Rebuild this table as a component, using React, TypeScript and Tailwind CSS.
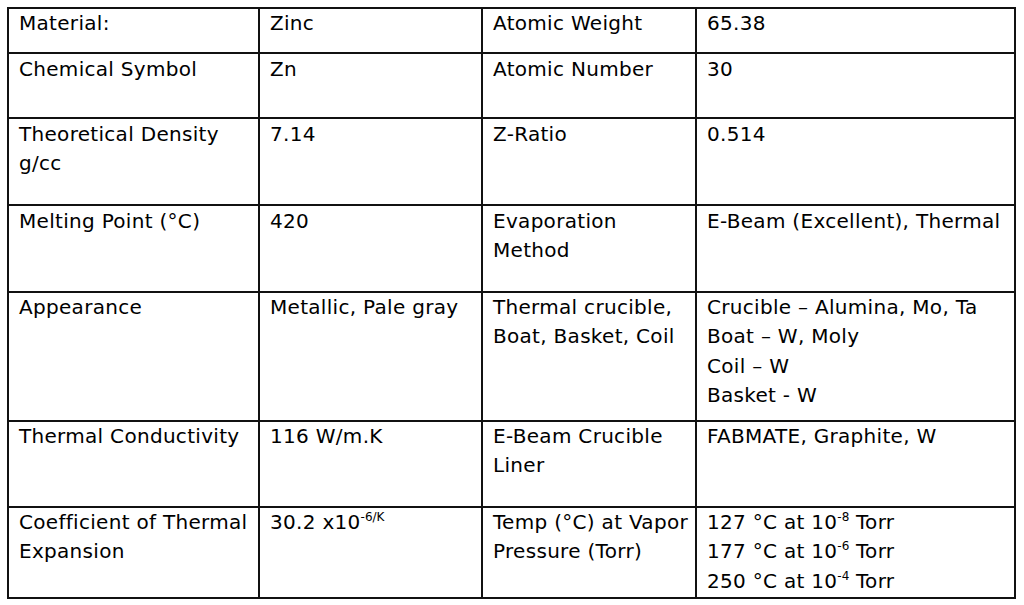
import type { ReactNode } from "react";

type Row = {
  h: string;
  shift: string;
  cells: ReactNode[];
};

const rows: Row[] = [
  {
    h: "h-[45px]",
    shift: "mt-0",
    cells: ["Material:", "Zinc", "Atomic Weight", "65.38"],
  },
  {
    h: "h-[65px]",
    shift: "mt-[1px]",
    cells: ["Chemical Symbol", "Zn", "Atomic Number", "30"],
  },
  {
    h: "h-[87px]",
    shift: "mt-[1px]",
    cells: [
      <>
        Theoretical Density
        <br />
        g/cc
      </>,
      "7.14",
      "Z-Ratio",
      "0.514",
    ],
  },
  {
    h: "h-[87px]",
    shift: "mt-[1px]",
    cells: [
      "Melting Point (°C)",
      "420",
      <>
        Evaporation
        <br />
        Method
      </>,
      "E-Beam (Excellent), Thermal",
    ],
  },
  {
    h: "h-[129px]",
    shift: "mt-0",
    cells: [
      "Appearance",
      "Metallic, Pale gray",
      <>
        Thermal crucible,
        <br />
        Boat, Basket, Coil
      </>,
      <>
        Crucible – Alumina, Mo, Ta
        <br />
        Boat – W, Moly
        <br />
        Coil – W
        <br />
        Basket - W
      </>,
    ],
  },
  {
    h: "h-[86px]",
    shift: "mt-0",
    cells: [
      "Thermal Conductivity",
      "116 W/m.K",
      <>
        E-Beam Crucible
        <br />
        Liner
      </>,
      "FABMATE, Graphite, W",
    ],
  },
  {
    h: "h-[91px]",
    shift: "mt-0",
    cells: [
      <>
        Coefficient of Thermal
        <br />
        Expansion
      </>,
      <>
        30.2 x10<Sup>-6/K</Sup>
      </>,
      <>
        Temp (°C) at Vapor
        <br />
        Pressure (Torr)
      </>,
      <>
        127 °C at 10<Sup>-8</Sup> Torr
        <br />
        177 °C at 10<Sup>-6</Sup> Torr
        <br />
        250 °C at 10<Sup>-4</Sup> Torr
      </>,
    ],
  },
];

const widths = ["w-[251px]", "w-[223px]", "w-[214px]", "w-[319px]"];

function Sup({ children }: { children: ReactNode }) {
  return (
    <span className="relative -top-[8px] text-[12px] leading-none tracking-normal">
      {children}
    </span>
  );
}

export default function App() {
  return (
    <div
      className="w-[1024px] h-[605px] bg-white pt-[7px] pl-[7px] text-black"
      style={{ fontFamily: '"DejaVu Sans", sans-serif' }}
    >
      <div className="w-[1009px] border-l-2 border-t-2 border-[#111]">
        {rows.map((row, i) => (
          <div key={i} className={`flex ${row.h}`}>
            {row.cells.map((cell, j) => (
              <div
                key={j}
                className={`${widths[j]} shrink-0 border-r-2 border-b-2 border-[#111] pl-[10px] overflow-hidden`}
              >
                <div
                  className={`${row.shift} text-[20px] leading-[29.3px] tracking-[0.3px] whitespace-nowrap`}
                >
                  {cell}
                </div>
              </div>
            ))}
          </div>
        ))}
      </div>
    </div>
  );
}
